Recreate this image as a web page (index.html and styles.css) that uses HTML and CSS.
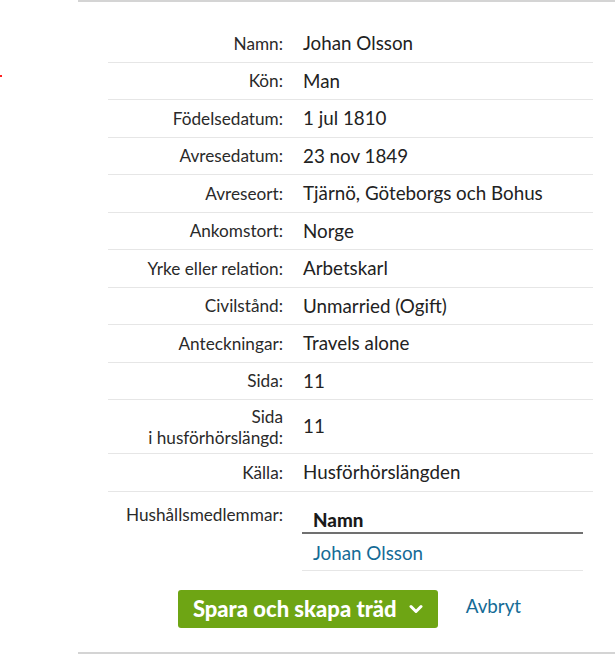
FILE: index.html
```html
<!DOCTYPE html>
<html lang="sv">
<head>
    <meta charset="UTF-8">
    <meta name="viewport" content="width=device-width, initial-scale=1.0">
    <title>Emigrant</title>
    <link rel="stylesheet" href="styles.css">
</head>
<body>
    <span class="marker"></span>

    <div class="panel">
        <div class="details">
            <div class="row"><span class="label">Namn:</span><span class="value">Johan Olsson</span></div>
            <div class="row"><span class="label">Kön:</span><span class="value">Man</span></div>
            <div class="row"><span class="label">Födelsedatum:</span><span class="value">1 jul 1810</span></div>
            <div class="row"><span class="label">Avresedatum:</span><span class="value">23 nov 1849</span></div>
            <div class="row"><span class="label">Avreseort:</span><span class="value">Tjärnö, Göteborgs och Bohus</span></div>
            <div class="row"><span class="label">Ankomstort:</span><span class="value">Norge</span></div>
            <div class="row"><span class="label">Yrke eller relation:</span><span class="value">Arbetskarl</span></div>
            <div class="row"><span class="label">Civilstånd:</span><span class="value">Unmarried (Ogift)</span></div>
            <div class="row"><span class="label">Anteckningar:</span><span class="value">Travels alone</span></div>
            <div class="row"><span class="label">Sida:</span><span class="value">11</span></div>
            <div class="row tall"><span class="label">Sida<br>i husförhörslängd:</span><span class="value">11</span></div>
            <div class="row"><span class="label">Källa:</span><span class="value">Husförhörslängden</span></div>
            <div class="row top">
                <span class="label">Hushållsmedlemmar:</span>
                <table class="members">
                    <thead><tr><th>Namn</th></tr></thead>
                    <tbody><tr><td><a href="#">Johan Olsson</a></td></tr></tbody>
                </table>
            </div>
        </div>

        <div class="actions">
            <button class="save">Spara och skapa träd
                <svg width="14" height="10" viewBox="0 0 14 10"><path d="M2 2.5 L7 7.5 L12 2.5" fill="none" stroke="#fff" stroke-width="3" stroke-linecap="round" stroke-linejoin="round"/></svg>
            </button>
            <a class="cancel" href="#">Avbryt</a>
        </div>
    </div>
</body>
</html>
```

FILE: styles.css
```css
body {
    margin: 0;
    font-family: Lato, "Open Sans", sans-serif;
    color: #222;
    background: #fff;
}
.marker {
    position: absolute;
    left: 0;
    top: 75px;
    width: 2px;
    height: 2px;
    background: #f22;
}
.panel {
    margin-left: 78px;
    border-top: 2px solid #d4d4d4;
    border-bottom: 2px solid #d4d4d4;
    padding: 24px 0 24px;
}
.details {
    margin-left: 30px;
    width: 485px;
}
.row {
    display: flex;
    align-items: center;
    gap: 20px;
    padding: 6px 0;
    min-height: 24.5px;
    border-bottom: 1px solid #e6e6e6;
}
.row:first-child {
    padding-top: 5px;
}
.row.tall {
    padding: 5.5px 0;
}
.row.tall .label {
    line-height: 21px;
}
.row.top {
    align-items: flex-start;
    border-bottom: none;
    padding-bottom: 0;
}
.label {
    width: 175px;
    flex: none;
    text-align: right;
    font-size: 17.2px;
    color: #2a2a2a;
}
.value {
    font-size: 18.8px;
    line-height: 24.5px;
}
.row.top .label {
    padding-top: 6px;
}
.members {
    width: 281px;
    margin-left: -1px;
    border-collapse: collapse;
    font-size: 18.8px;
}
.members th {
    text-align: left;
    font-weight: 900;
    padding: 10px 11px 1px;
    border-bottom: 2px solid #707070;
    color: #1a1a1a;
}
.members td {
    padding: 7px 11px 6px;
    border-bottom: 1px solid #e6e6e6;
}
.members a {
    color: #156b96;
    text-decoration: none;
}
.actions {
    display: flex;
    justify-content: center;
    align-items: center;
    gap: 28px;
    margin-top: 19px;
    padding-left: 6px;
}
.save {
    display: flex;
    align-items: center;
    gap: 12px;
    height: 38px;
    padding: 0 15px;
    background: #6ea514;
    color: #fff;
    border: none;
    border-radius: 3px;
    font-family: inherit;
    font-size: 22px;
    font-weight: 900;
    cursor: pointer;
}
.cancel {
    color: #156b96;
    text-decoration: none;
    font-size: 18.8px;
    margin-top: -6px;
}
```
